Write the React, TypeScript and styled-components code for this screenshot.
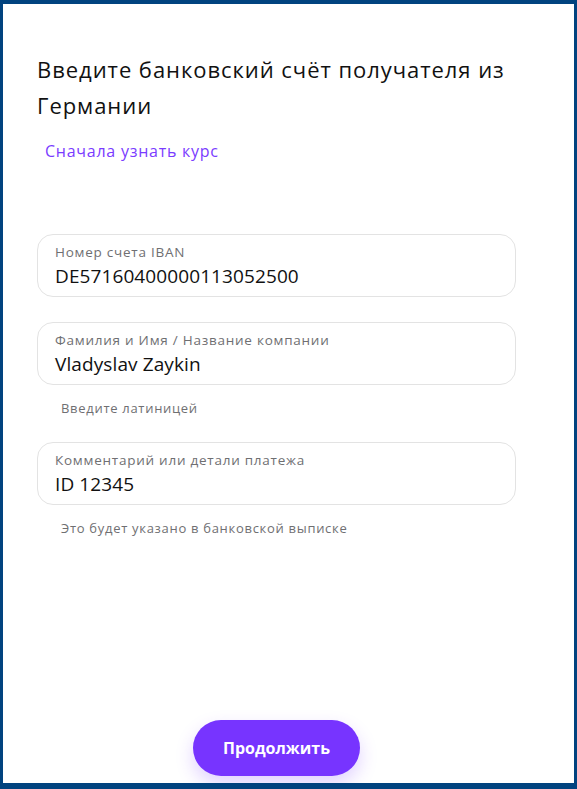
import React from "react";
import styled, { createGlobalStyle } from "styled-components";

const GlobalStyle = createGlobalStyle`
  html, body {
    margin: 0;
    padding: 0;
    background: #01437f;
  }
  * { box-sizing: border-box; }
`;

const Frame = styled.div`
  width: 577px;
  height: 789px;
  border-style: solid;
  border-color: #01437f;
  border-width: 4px 3px 6px 3px;
  background: #ffffff;
  display: flex;
  flex-direction: column;
  padding: 47px 58px 0 34px;
  font-family: "Open Sans", "Noto Sans", sans-serif;
  overflow: hidden;
`;

const Title = styled.h1`
  margin: 0;
  font-size: 22px;
  line-height: 36px;
  font-weight: 400;
  color: #111111;
  letter-spacing: 0.95px;
`;

const RateLink = styled.a`
  margin: 18px 0 0 8px;
  font-size: 16px;
  line-height: 20px;
  color: #7a3cff;
  letter-spacing: 0.75px;
  text-decoration: none;
  cursor: pointer;
  align-self: flex-start;
`;

const Fields = styled.div`
  margin-top: 73px;
  display: flex;
  flex-direction: column;
`;

const FieldGroup = styled.div<{ $gap: number }>`
  display: flex;
  flex-direction: column;
  margin-bottom: ${(p) => p.$gap}px;
`;

const FieldBox = styled.label`
  display: flex;
  flex-direction: column;
  height: 63px;
  border: 1px solid #e3e3e3;
  border-radius: 16px;
  padding: 9px 16px 0 17px;
`;

const FieldLabel = styled.span`
  font-size: 13.5px;
  line-height: 16px;
  color: #6f6f72;
  letter-spacing: 0.75px;
`;

const FieldValue = styled.span`
  margin-top: 4px;
  font-size: 19px;
  line-height: 24px;
  color: #111111;
  letter-spacing: 0.1px;
`;

const Hint = styled.div`
  margin: 15px 0 0 24px;
  font-size: 13px;
  line-height: 16px;
  color: #6f6f72;
  letter-spacing: 0.7px;
`;

const Spacer = styled.div`
  flex: 1;
`;

const ButtonRow = styled.div`
  display: flex;
  justify-content: center;
  margin-bottom: 7px;
`;

const PrimaryButton = styled.button`
  width: 167px;
  height: 56px;
  border: none;
  border-radius: 28px;
  background: #7734ff;
  color: #ffffff;
  font-family: inherit;
  font-size: 16px;
  font-weight: 700;
  box-shadow: 0 8px 18px rgba(119, 52, 255, 0.22);
  cursor: pointer;
`;

const fields = [
  { label: "Номер счета IBAN", value: "DE57160400000113052500", hint: "", gap: 25 },
  { label: "Фамилия и Имя / Название компании", value: "Vladyslav Zaykin", hint: "Введите латиницей", gap: 26 },
  { label: "Комментарий или детали платежа", value: "ID 12345", hint: "Это будет указано в банковской выписке", gap: 0 },
];

export default function App() {
  return (
    <>
      <GlobalStyle />
      <Frame>
        <Title>Введите банковский счёт получателя из Германии</Title>
        <RateLink>Сначала узнать курс</RateLink>
        <Fields>
          {fields.map((f) => (
            <FieldGroup key={f.label} $gap={f.gap}>
              <FieldBox>
                <FieldLabel>{f.label}</FieldLabel>
                <FieldValue>{f.value}</FieldValue>
              </FieldBox>
              {f.hint && <Hint>{f.hint}</Hint>}
            </FieldGroup>
          ))}
        </Fields>
        <Spacer />
        <ButtonRow>
          <PrimaryButton>Продолжить</PrimaryButton>
        </ButtonRow>
      </Frame>
    </>
  );
}
